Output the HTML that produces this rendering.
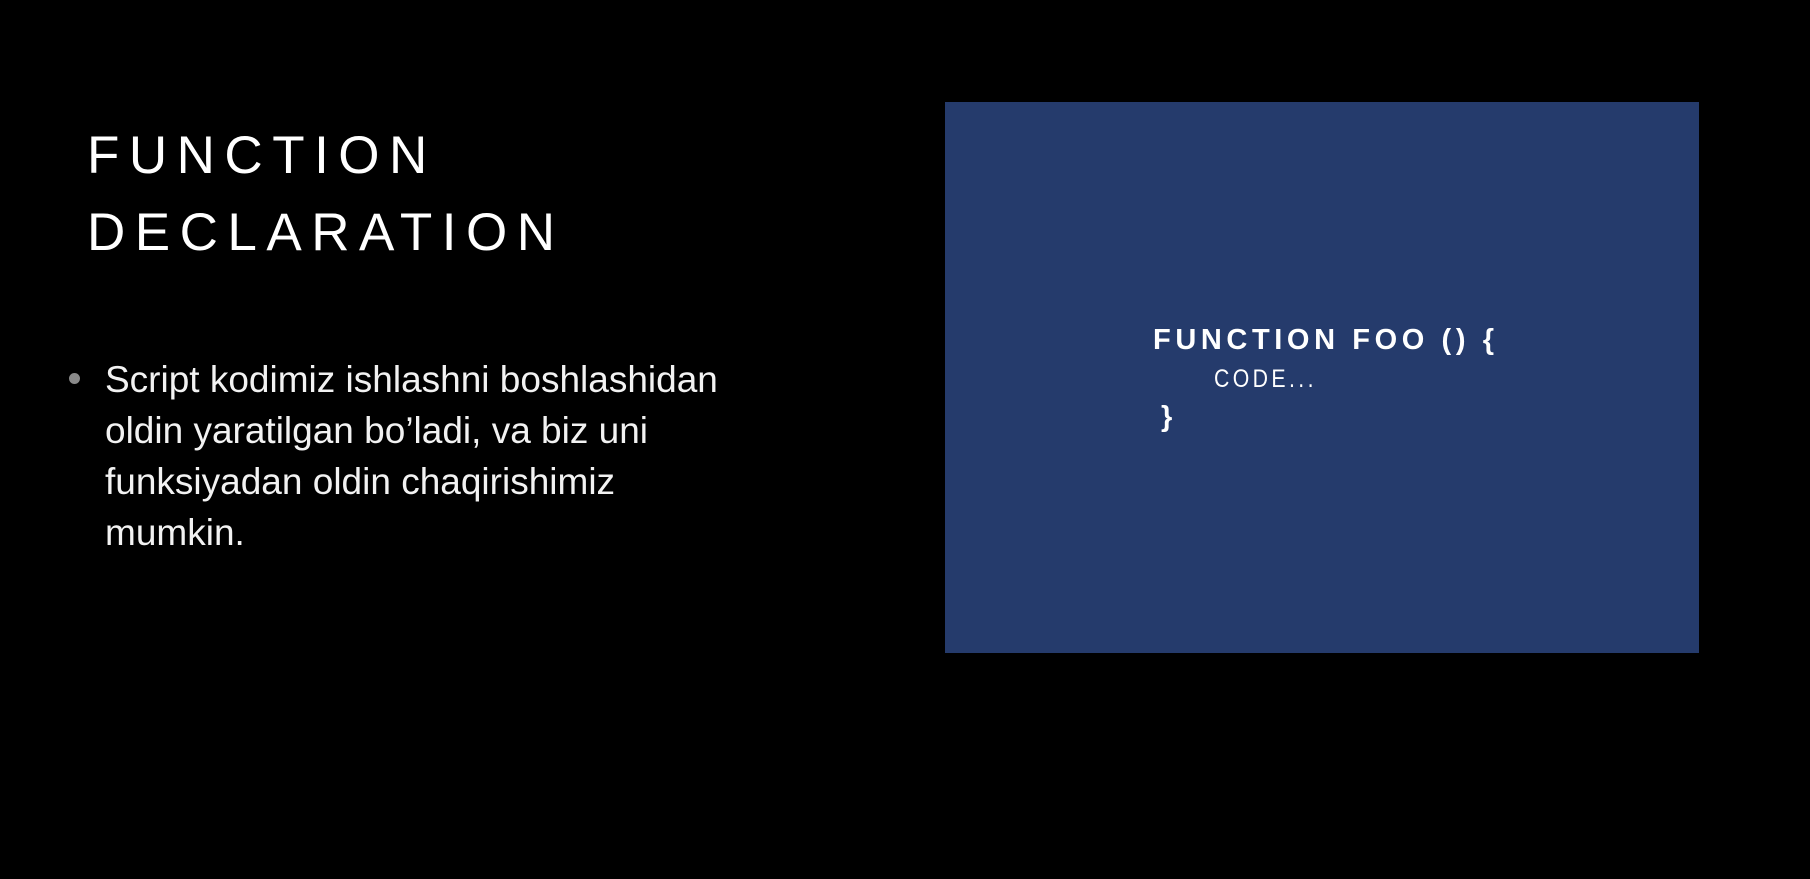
<!DOCTYPE html>
<html><head><meta charset="utf-8"><style>
html,body{margin:0;padding:0;background:#000;width:1810px;height:879px;overflow:hidden;position:relative;font-family:"Liberation Sans",sans-serif;color:#fff}
.t{position:absolute;left:87px;font-size:53px;letter-spacing:9.5px;font-weight:normal;line-height:1;white-space:nowrap}
.b{position:absolute;left:105px;font-size:37px;line-height:51px;color:#f2f2f2;white-space:nowrap}
.dot{position:absolute;left:69px;top:373px;width:11px;height:11px;border-radius:50%;background:#8a8a8a}
.box{position:absolute;left:945px;top:102px;width:754px;height:551px;background:#253b6c}
.c{position:absolute;white-space:nowrap;line-height:1;color:#fff}
</style></head><body>
<div class="t" style="top:129px">FUNCTION</div>
<div class="t" style="top:206px">DECLARATION</div>
<div class="dot"></div>
<div class="b" style="top:354px">Script kodimiz ishlashni boshlashidan<br>oldin yaratilgan bo’ladi, va biz uni<br>funksiyadan oldin chaqirishimiz<br>mumkin.</div>
<div class="box"></div>
<div class="c" style="left:1153px;top:326px;font-size:29px;font-weight:bold;letter-spacing:4.6px">FUNCTION FOO () {</div>
<div class="c" style="left:1214px;top:367px;font-size:25px;letter-spacing:4px;transform:scaleX(0.85);transform-origin:left">CODE...</div>
<div class="c" style="left:1161px;top:403px;font-size:29px;font-weight:bold">}</div>
</body></html>
